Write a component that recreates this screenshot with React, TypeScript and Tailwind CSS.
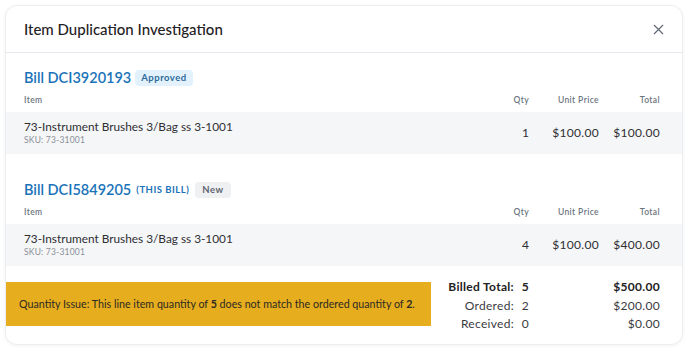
import { X } from 'lucide-react';

interface LineItem {
  name: string;
  sku: string;
  qty: number;
  unitPrice: string;
  total: string;
}

interface Bill {
  number: string;
  isThisBill?: boolean;
  status: string;
  items: LineItem[];
}

const bills: Bill[] = [
  {
    number: 'DCI3920193',
    status: 'Approved',
    items: [
      { name: '73-Instrument Brushes 3/Bag ss 3-1001', sku: '73-31001', qty: 1, unitPrice: '$100.00', total: '$100.00' }
    ]
  },
  {
    number: 'DCI5849205',
    isThisBill: true,
    status: 'New',
    items: [
      { name: '73-Instrument Brushes 3/Bag ss 3-1001', sku: '73-31001', qty: 4, unitPrice: '$100.00', total: '$400.00' }
    ]
  }
];

const cols = 'grid grid-cols-[1fr_60px_70px_61px] items-center pl-[18px] pr-[22px]';

function BillSection({ bill }: { bill: Bill }) {
  return (
    <div>
      <div className="flex items-center h-5 pl-[18px] leading-none">
        <span className="text-[14.5px] font-semibold text-[#1a73b9]">Bill {bill.number}</span>
        {bill.isThisBill && (
          <span className="ml-[5px] text-[9.5px] font-bold text-[#1a73b9] tracking-[0.5px]">(THIS BILL)</span>
        )}
        {bill.status === 'Approved' ? (
          <span className="ml-1 px-[6px] py-[3px] rounded bg-[#e2f1fc] text-[#2d6b9c] text-[9.5px] font-bold tracking-[0.5px]">
            {bill.status}
          </span>
        ) : (
          <span className="ml-[6px] px-[7px] py-[3px] rounded bg-[#eef0f2] text-[#5f6670] text-[9.5px] font-bold tracking-[0.5px]">
            {bill.status}
          </span>
        )}
      </div>

      <div className={`${cols} h-6 text-[8.5px] font-semibold text-[#6b7480] tracking-[0.4px]`}>
        <div>Item</div>
        <div className="text-right">Qty</div>
        <div className="text-right">Unit Price</div>
        <div className="text-right">Total</div>
      </div>

      {bill.items.map((item) => (
        <div key={item.sku + item.qty} className={`${cols} h-[42px] bg-[#f5f6f8] text-[12px] text-[#2f2f33]`}>
          <div className="leading-none">
            <div className="text-[11.8px]">{item.name}</div>
            <div className="mt-[3px] text-[8.5px] text-[#8a8f96] tracking-[0.2px]">SKU: {item.sku}</div>
          </div>
          <div className="text-right">{item.qty}</div>
          <div className="text-right tracking-[0.3px]">{item.unitPrice}</div>
          <div className="text-right tracking-[0.3px]">{item.total}</div>
        </div>
      ))}
    </div>
  );
}

export default function App() {
  return (
    <div className="w-[688px] h-[351px] bg-white p-[5px] font-['Lato',sans-serif]">
      <div className="h-[340px] rounded-xl border border-[#eceef1] shadow-[0_1px_4px_rgba(0,0,0,0.05)] bg-white overflow-hidden">
        {/* шапка */}
        <div className="flex items-center justify-between h-[47px] pl-[18px] pr-[15px] border-b border-[#e4e7eb]">
          <h1 className="text-[15px] font-medium text-[#1f2124]">Item Duplication Investigation</h1>
          <X className="w-[17px] h-[17px] text-[#5b6470]" strokeWidth={1.5} />
        </div>

        <div className="pt-[15px]">
          <BillSection bill={bills[0]} />
          <div className="h-[26px]" />
          <BillSection bill={bills[1]} />
        </div>

        {/* итоги */}
        <div className="flex mt-[16px]">
          <div className="w-[425px] h-[44px] bg-[#e6ad1e] flex items-center pl-[13px] text-[10.7px] text-[#2d2a22] whitespace-nowrap">
            <span>
              Quantity Issue: This line item quantity of <b>5</b> does not match the ordered quantity of <b>2</b>.
            </span>
          </div>
          <div className="flex-1 grid grid-cols-[1fr_10px_70px_61px] auto-rows-[18.5px] items-center pr-[22px] -mt-[4px] text-[12px] text-[#3a3b3f] tracking-[0.3px]">
            <div className="text-right pr-[5px] font-bold text-[#222]">Billed Total:</div>
            <div className="text-right font-bold text-[#222]">5</div>
            <div />
            <div className="text-right font-bold text-[#222]">$500.00</div>

            <div className="text-right pr-[5px]">Ordered:</div>
            <div className="text-right">2</div>
            <div />
            <div className="text-right">$200.00</div>

            <div className="text-right pr-[5px]">Received:</div>
            <div className="text-right">0</div>
            <div />
            <div className="text-right">$0.00</div>
          </div>
        </div>
      </div>
    </div>
  );
}
